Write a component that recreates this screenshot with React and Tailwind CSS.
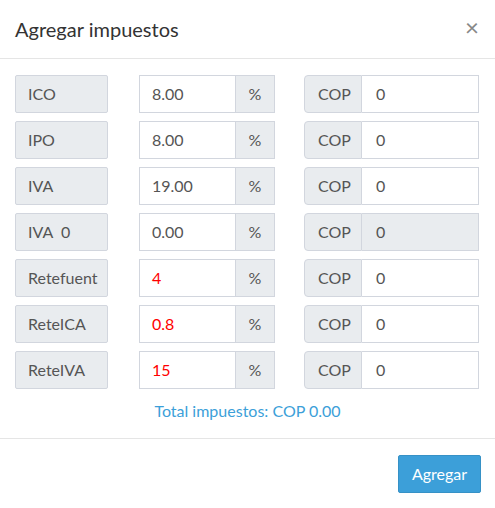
import React from "react";

const rows = [
  { name: "ICO", pct: "8.00", red: false, disabled: false },
  { name: "IPO", pct: "8.00", red: false, disabled: false },
  { name: "IVA", pct: "19.00", red: false, disabled: false },
  { name: "IVA  0", pct: "0.00", red: false, disabled: true },
  { name: "Retefuent", pct: "4", red: true, disabled: false },
  { name: "ReteICA", pct: "0.8", red: true, disabled: false },
  { name: "ReteIVA", pct: "15", red: true, disabled: false },
];

export default function App() {
  return (
    <div className="w-[495px] h-[508px] bg-white text-[#555] font-['Lato',sans-serif]">
      <div className="flex items-center justify-between h-[59px] px-[15px] border-b border-[#e5e5e5]">
        <h4 className="text-[20px] text-[#333] leading-none">Agregar impuestos</h4>
        <span className="text-[24px] leading-none text-[#888] mr-[1px] -mt-[4px]">×</span>
      </div>
      <div className="pt-[16px] px-[15px] flex flex-col gap-[8px]">
        {rows.map((r) => (
          <div key={r.name} className="flex h-[38px] text-[16px]">
            <div className="w-[93px] bg-[#e9ecef] border border-[#d2d6de] rounded-[2px] pl-[12px] flex items-center">
              <div className="whitespace-pre">{r.name}</div>
            </div>
            <div className="ml-[31px] flex">
              <div className={`w-[97px] border border-[#d2d6de] flex items-center pl-[12px] ${r.red ? "text-[#ff0000]" : ""}`}>
                {r.pct}
              </div>
              <div className="w-[39px] bg-[#e9ecef] border border-l-0 border-[#d2d6de] flex items-center justify-center">
                %
              </div>
            </div>
            <div className="ml-[29px] flex">
              <div className="w-[58px] bg-[#e9ecef] border border-[#d2d6de] rounded-l-[4px] flex items-center pl-[13px]">
                COP
              </div>
              <div className={`w-[117px] border border-l-0 border-[#d2d6de] flex items-center pl-[14px] ${r.disabled ? "bg-[#e9ecef]" : ""}`}>
                0
              </div>
            </div>
          </div>
        ))}
      </div>
      <div className="h-[47px] flex items-center justify-center text-[16px] text-[#3c9fd9] border-b border-[#e5e5e5] mt-[3px] pb-[8px]">
        Total impuestos: COP 0.00
      </div>
      <div className="flex justify-end px-[14px] pt-[16px]">
        <button className="w-[83px] h-[38px] bg-[#3c9fd9] border border-[#3691c6] rounded-[2px] text-white text-[16px]">
          Agregar
        </button>
      </div>
    </div>
  );
}
